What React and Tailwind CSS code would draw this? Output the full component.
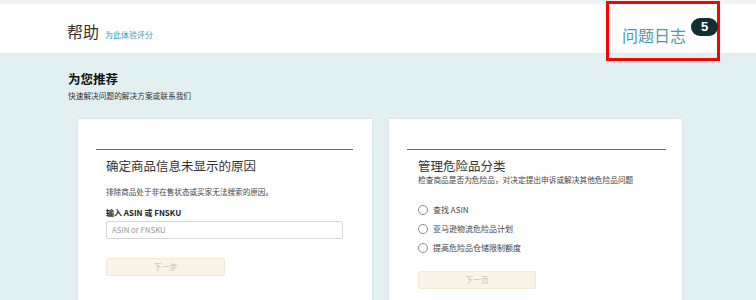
export default function App() {
  const font = { fontFamily: '"Noto Sans CJK SC", "Liberation Sans", Arial, sans-serif' };
  return (
    <div className="w-[756px] h-[300px] overflow-hidden bg-[#e3f0f2] relative" style={font}>
      <div className="h-[4px] bg-[#eef3f6]" />
      <div className="h-[50px] bg-white border-b border-[#e4eaec] flex items-baseline pl-[67px] pt-[19px]">
        <span className="text-[16px] leading-[16px] text-[#333]">帮助</span>
        <span className="ml-[6px] text-[8px] leading-[8px] text-[#3f96ab]">为此体验评分</span>
      </div>
      <div className="absolute top-[1px] right-[36px] w-[114px] h-[60px] border-[3px] border-[#ff0000] flex items-start">
        <span className="shrink-0 whitespace-nowrap ml-[13px] mt-[23px] text-[16px] leading-[17px] text-[#4b9bb0]">问题日志</span>
        <span className="shrink-0 ml-[5px] mt-[14px] w-[27px] h-[18px] rounded-full bg-[#0f2f35] text-white text-[13px] font-bold leading-[18px] text-center" style={{ fontFamily: '"Liberation Sans", Arial, sans-serif' }}>5</span>
      </div>
      <div className="pl-[68px] pt-[18px]">
        <div className="text-[12.5px] leading-[14px] font-bold text-[#0f1111]">为您推荐</div>
        <div className="mt-[5px] text-[7.7px] leading-[10px] text-[#333]">快速解决问题的解决方案或联系我们</div>
      </div>
      <div className="flex gap-[17px] pl-[78px] mt-[18px]">
        <div className="w-[294px] h-[200px] bg-white shadow-[0_0_2px_rgba(0,0,0,0.12)] pt-[30px] pl-[18px] pr-[19px]">
          <div className="border-t-[1.5px] border-[#6b6b6b]" />
          <div className="px-[10px]">
            <div className="mt-[8px] text-[12.5px] leading-[16px] text-[#333]">确定商品信息未显示的原因</div>
            <div className="mt-[13px] text-[7.6px] leading-[10px] text-[#444]">排除商品处于非在售状态或买家无法搜索的原因。</div>
            <div className="mt-[11px] text-[8px] leading-[10px] font-bold text-[#222]">输入 ASIN 或 FNSKU</div>
            <div className="mt-[3px] w-[237px] h-[18px] border border-[#d5d9d9] rounded-[2px] flex items-center px-[5px] text-[7.8px] text-[#999]">ASIN or FNSKU</div>
            <div className="mt-[19px] w-[119px] h-[18px] bg-[#fbf3e5] border border-[#f3e9d6] rounded-[2px] flex items-center justify-center text-[7.8px] text-[#c4bcb0]">下一步</div>
          </div>
        </div>
        <div className="w-[293px] h-[200px] bg-white shadow-[0_0_2px_rgba(0,0,0,0.12)] pt-[30px] pl-[18px] pr-[16px]">
          <div className="border-t-[1.5px] border-[#6b6b6b]" />
          <div className="px-[11px]">
            <div className="mt-[8px] text-[12.5px] leading-[16px] text-[#333]">管理危险品分类</div>
            <div className="mt-[1px] text-[7.7px] leading-[10px] text-[#444]">检查商品是否为危险品，对决定提出申诉或解决其他危险品问题</div>
            <div className="mt-[18px] flex flex-col gap-[5px]">
              {["查找 ASIN", "亚马逊物流危险品计划", "提高危险品仓储限制额度"].map((t) => (
                <div key={t} className="h-[14px] flex items-center">
                  <span className="shrink-0 w-[10px] h-[10px] rounded-full border border-[#8a8a8a] bg-white" />
                  <span className="ml-[5px] text-[8px] text-[#444]">{t}</span>
                </div>
              ))}
            </div>
            <div className="mt-[16px] w-[118px] h-[18px] bg-[#fbf3e5] border border-[#f3e9d6] rounded-[2px] flex items-center justify-center text-[7.8px] text-[#c4bcb0]">下一页</div>
          </div>
        </div>
      </div>
    </div>
  );
}
